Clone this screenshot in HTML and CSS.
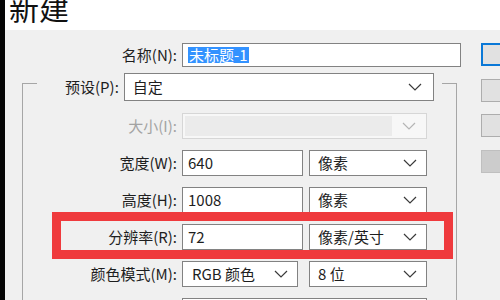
FILE: index.html
```html
<!DOCTYPE html>
<html lang="zh-CN">
<head>
  <meta charset="UTF-8">
  <title>新建</title>
  <link rel="stylesheet" href="styles.css">
</head>
<body>
  <div class="screen">
    <div class="edge"></div>
    <div class="dialog">
      <div class="titlebar"><h1 class="title">新建</h1></div>
      <div class="content">
        <div class="form">
          <div class="row">
            <span class="label label-top">名称(N):</span>
            <div class="field field-name"><span class="selected">未标题-1</span></div>
          </div>

          <!-- Preset group -->
          <div class="group">
            <div class="legend">
              <span class="label">预设(P):</span>
              <div class="field select select-preset">
                <span>自定</span>
                <svg class="chevron" width="14" height="8" viewBox="0 0 14 8"><polyline points="1,1 7,7 13,1"/></svg>
              </div>
            </div>
            <div class="row">
              <span class="label disabled">大小(I):</span>
              <div class="select-off">
                <div class="select-off-text"></div>
                <div class="select-off-arrow">
                  <svg class="chevron" width="14" height="8" viewBox="0 0 14 8"><polyline points="1,1 7,7 13,1"/></svg>
                </div>
              </div>
            </div>
            <div class="row">
              <span class="label">宽度(W):</span>
              <div class="field field-num">640</div>
              <div class="field select select-unit">
                <span>像素</span>
                <svg class="chevron" width="14" height="8" viewBox="0 0 14 8"><polyline points="1,1 7,7 13,1"/></svg>
              </div>
            </div>
            <div class="row">
              <span class="label">高度(H):</span>
              <div class="field field-num">1008</div>
              <div class="field select select-unit">
                <span>像素</span>
                <svg class="chevron" width="14" height="8" viewBox="0 0 14 8"><polyline points="1,1 7,7 13,1"/></svg>
              </div>
            </div>
            <div class="row">
              <span class="label">分辨率(R):</span>
              <div class="field field-num">72</div>
              <div class="field select select-unit">
                <span>像素/英寸</span>
                <svg class="chevron" width="14" height="8" viewBox="0 0 14 8"><polyline points="1,1 7,7 13,1"/></svg>
              </div>
            </div>
            <div class="row">
              <span class="label">颜色模式(M):</span>
              <div class="field select select-mode">
                <span>RGB 颜色</span>
                <svg class="chevron" width="14" height="8" viewBox="0 0 14 8"><polyline points="1,1 7,7 13,1"/></svg>
              </div>
              <div class="field select select-unit select-bits">
                <span>8 位</span>
                <svg class="chevron" width="14" height="8" viewBox="0 0 14 8"><polyline points="1,1 7,7 13,1"/></svg>
              </div>
            </div>
            <div class="row">
              <span class="label"></span>
              <div class="field select select-wide"></div>
            </div>
          </div>
        </div>

        <div class="buttons">
          <button class="btn btn-default">确定</button>
          <button class="btn">复位</button>
          <button class="btn">存储预设(S)...</button>
          <button class="btn btn-off">删除预设(D)...</button>
        </div>
      </div>
    </div>

    <div class="mark"></div>
  </div>
</body>
</html>
```

FILE: styles.css
```css
/* General styling */
body {
  margin: 0;
  font-family: "Noto Sans CJK SC", "Noto Sans", sans-serif;
  font-size: 15px;
  color: #1e1e1e;
  background: #f0f0f0;
  overflow: hidden;
}
.screen {
  position: relative;
  display: flex;
  width: 500px;
  height: 300px;
  overflow: hidden;
}
.edge {
  width: 5px;
  flex-shrink: 0;
  background: #050505;
}
.dialog {
  flex: 1;
  background: #f0f0f0;
}
.titlebar {
  height: 30px;
  background: #fff;
  overflow: hidden;
  padding-left: 4px;
}
.title {
  margin: -8px 0 0;
  font-size: 30px;
  font-weight: normal;
  line-height: 30px;
  color: #111;
}
.content {
  display: flex;
  padding-top: 13px;
}
.form {
  width: 457px;
  flex-shrink: 0;
}

/* Rows */
.row {
  display: flex;
  align-items: center;
  gap: 5px;
  height: 26px;
}
.row:first-child {
  height: 24px;
}
.label {
  width: 154px;
  text-align: right;
  white-space: nowrap;
  line-height: 20px;
}
.label-top {
  width: 172px;
}
.legend .label {
  width: auto;
}
.label.disabled {
  color: #a3a3a3;
}

/* Group box */
.group {
  box-sizing: border-box;
  width: 435px;
  margin: 16px 0 0 17px;
  border: 1px solid #a6a6a6;
  border-bottom: none;
  display: flex;
  flex-direction: column;
  gap: 11px;
  height: 300px;
}
.legend {
  display: flex;
  align-items: center;
  gap: 5px;
  align-self: flex-start;
  margin: -11px 0 1px 14px;
  padding: 0 8px 0 28px;
  background: #f0f0f0;
}

/* Fields */
.field {
  box-sizing: border-box;
  height: 26px;
  display: flex;
  align-items: center;
  background: #fff;
  border: 1px solid #828282;
  padding-left: 5px;
  white-space: nowrap;
  line-height: 20px;
}
.field-name {
  width: 279px;
  height: 24px;
}
.selected {
  background: #3392ff;
  color: #fff;
  line-height: 16px;
  padding: 0 1px;
}
.field-num {
  width: 121px;
}
.select {
  justify-content: space-between;
  padding: 0 9px 0 8px;
}
.select-preset {
  width: 310px;
  height: 28px;
  padding-right: 11px;
}
.select-unit {
  width: 118px;
  margin-left: 1px;
}
.select-mode {
  width: 116px;
  padding-left: 9px;
}
.select-bits {
  margin-left: 6px;
}
.select-wide {
  width: 245px;
}
.chevron {
  fill: none;
  stroke: #3a3a3a;
  stroke-width: 1.2;
}

/* Disabled select */
.select-off {
  box-sizing: border-box;
  width: 245px;
  height: 26px;
  display: flex;
  border: 1px solid #d6d6d6;
  background: #f7f7f7;
}
.select-off-text {
  flex: 1;
  margin: 2px 0 2px 2px;
  background: #ebebeb;
}
.select-off-arrow {
  width: 34px;
  display: flex;
  align-items: center;
  justify-content: center;
}
.select-off-arrow .chevron {
  stroke: #b5b5b5;
}

/* Buttons */
.buttons {
  display: flex;
  flex-direction: column;
  margin-left: 19px;
}
.btn {
  box-sizing: border-box;
  width: 128px;
  height: 23px;
  margin-bottom: 12px;
  border: 1px solid #adadad;
  background: #e1e1e1;
  font-family: "Noto Sans CJK SC", sans-serif;
  font-size: 14px;
  color: #1e1e1e;
  padding: 0;
  white-space: nowrap;
}
.btn-default {
  border: 2px solid #0a78d7;
  margin-bottom: 13px;
}
.btn-off {
  margin-top: 1px;
  background: #cccccc;
  border-color: #bfbfbf;
  color: #8a8a8a;
}

/* Red annotation box */
.mark {
  position: absolute;
  left: 52px;
  top: 212px;
  width: 401px;
  height: 47px;
  box-sizing: border-box;
  border: 9px solid #ef3a3d;
}
```
